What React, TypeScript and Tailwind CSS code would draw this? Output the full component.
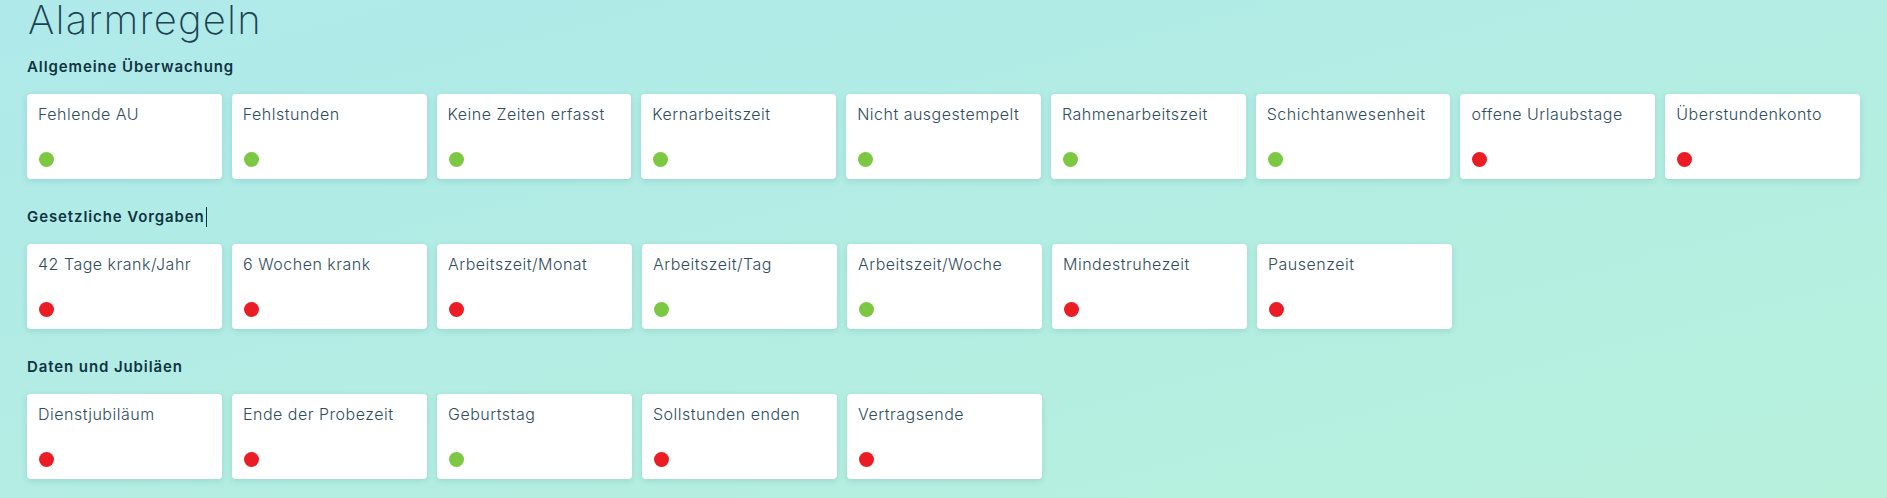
import React from "react";

type Rule = { name: string; ok: boolean };

const sections: { title: string; caret?: boolean; rules: Rule[] }[] = [
  {
    title: "Allgemeine Überwachung",
    rules: [
      { name: "Fehlende AU", ok: true },
      { name: "Fehlstunden", ok: true },
      { name: "Keine Zeiten erfasst", ok: true },
      { name: "Kernarbeitszeit", ok: true },
      { name: "Nicht ausgestempelt", ok: true },
      { name: "Rahmenarbeitszeit", ok: true },
      { name: "Schichtanwesenheit", ok: true },
      { name: "offene Urlaubstage", ok: false },
      { name: "Überstundenkonto", ok: false },
    ],
  },
  {
    title: "Gesetzliche Vorgaben",
    caret: true,
    rules: [
      { name: "42 Tage krank/Jahr", ok: false },
      { name: "6 Wochen krank", ok: false },
      { name: "Arbeitszeit/Monat", ok: false },
      { name: "Arbeitszeit/Tag", ok: true },
      { name: "Arbeitszeit/Woche", ok: true },
      { name: "Mindestruhezeit", ok: false },
      { name: "Pausenzeit", ok: false },
    ],
  },
  {
    title: "Daten und Jubiläen",
    rules: [
      { name: "Dienstjubiläum", ok: false },
      { name: "Ende der Probezeit", ok: false },
      { name: "Geburtstag", ok: true },
      { name: "Sollstunden enden", ok: false },
      { name: "Vertragsende", ok: false },
    ],
  },
];

const RuleCard: React.FC<{ rule: Rule }> = ({ rule }) => (
  <div className="flex h-[85px] w-[195px] flex-col justify-between rounded-[4px] bg-white pt-[8px] pb-[12px] pl-[11px] shadow-[0_2px_6px_rgba(40,120,120,0.18)]">
    <p className="text-[16px] leading-6 font-light tracking-[0.5px] text-[#2f4d5c]">{rule.name}</p>
    <span
      className={
        rule.ok
          ? "ml-[1px] block h-[15px] w-[15px] rounded-full bg-[#7dc843]"
          : "ml-[1px] block h-[15px] w-[15px] rounded-full bg-[#ec1c24]"
      }
    />
  </div>
);

export default function App() {
  return (
    <div className="h-[498px] w-full bg-gradient-to-br from-[#afe9ea] to-[#b7f1dc] px-[27px] font-['Inter',sans-serif]">
      <h1 className="pl-[1px] text-[40px] leading-10 font-extralight tracking-[1.2px] text-[#1b4352]">
        Alarmregeln
      </h1>
      {sections.map((s, i) => (
        <section key={s.title} className={i === 0 ? "mt-[17px]" : "mt-[28px]"}>
          <h2 className="flex h-5 items-center text-[15px] leading-5 font-semibold tracking-[0.9px] text-[#0e3442]">
            {s.title}
            {s.caret && <span className="ml-[1px] inline-block h-5 w-px bg-[#0e3442]" />}
          </h2>
          <div className="mt-[17px] flex gap-[10px]">
            {s.rules.map((r) => (
              <RuleCard key={r.name} rule={r} />
            ))}
          </div>
        </section>
      ))}
    </div>
  );
}
